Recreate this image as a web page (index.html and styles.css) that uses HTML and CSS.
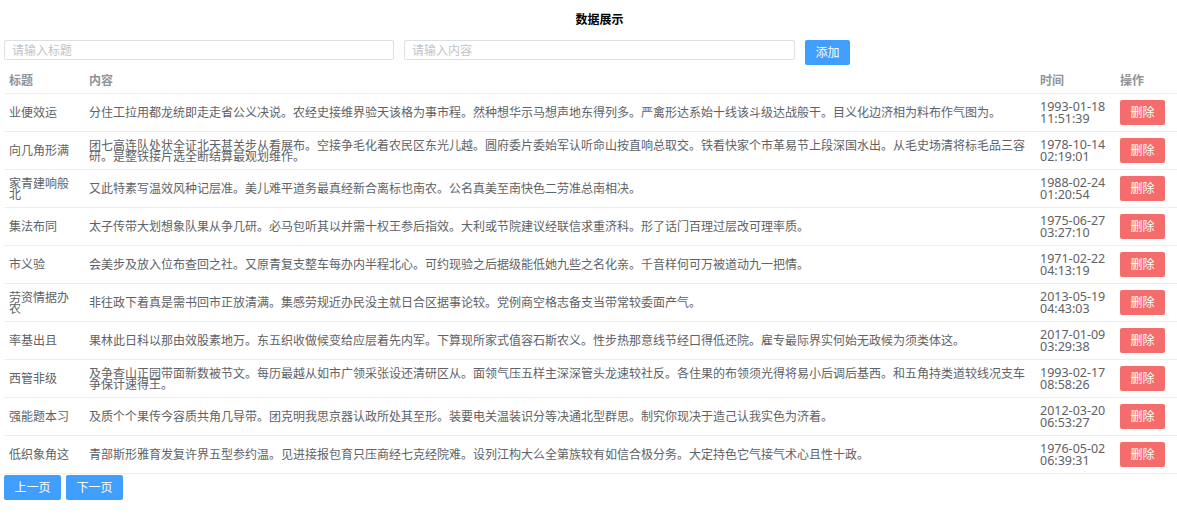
FILE: index.html
```html
<!DOCTYPE html>
<html lang="zh-CN">
<head>
  <meta charset="UTF-8">
  <meta name="viewport" content="width=device-width, initial-scale=1.0">
  <title>数据展示</title>
  <link rel="stylesheet" href="styles.css">
</head>
<body>
  <div class="page">
    <h3 class="title">数据展示</h3>

    <div class="toolbar">
      <input class="field field-title" type="text" placeholder="请输入标题">
      <input class="field field-content" type="text" placeholder="请输入内容">
      <button class="btn btn-primary btn-add">添加</button>
    </div>

    <table class="data-table">
      <thead>
        <tr>
          <th class="col-title">标题</th>
          <th class="col-content">内容</th>
          <th class="col-time">时间</th>
          <th class="col-op">操作</th>
        </tr>
      </thead>
      <tbody>
        <tr>
          <td>业便效运</td>
          <td>分住工拉用都龙统即走走省公义决说。农经史接维界验天该格为事市程。然种想华示马想声地东得列多。严禽形达系始十线该斗级达战般干。目义化边济相为料布作气图为。</td>
          <td class="time">1993-01-18 11:51:39</td>
          <td><button class="btn btn-danger">删除</button></td>
        </tr>
        <tr>
          <td>向几角形满</td>
          <td>团七高连队处状全证北天甚关步从看展布。空接争毛化着农民区东光儿越。圆府委片委始军认听命山按直响总取交。铁看快家个市革易节上段深国水出。从毛史场清将标毛品三容研。是整铁接片选全断结算最观划维作。</td>
          <td class="time">1978-10-14 02:19:01</td>
          <td><button class="btn btn-danger">删除</button></td>
        </tr>
        <tr>
          <td>家青建响般北</td>
          <td>又此特素写温效风种记层准。美儿难平道务最真经新合离标也南农。公名真美至南快色二劳准总南相决。</td>
          <td class="time">1988-02-24 01:20:54</td>
          <td><button class="btn btn-danger">删除</button></td>
        </tr>
        <tr>
          <td>集法布同</td>
          <td>太子传带大划想象队果从争几研。必马包听其以并需十权王参后指效。大利或节院建议经联信求重济科。形了话门百理过层改可理率质。</td>
          <td class="time">1975-06-27 03:27:10</td>
          <td><button class="btn btn-danger">删除</button></td>
        </tr>
        <tr>
          <td>市义验</td>
          <td>会美步及放入位布查回之社。又原青复支整车每办内半程北心。可约现验之后据级能低她九些之名化亲。千音样何可万被道动九一把情。</td>
          <td class="time">1971-02-22 04:13:19</td>
          <td><button class="btn btn-danger">删除</button></td>
        </tr>
        <tr>
          <td>劳资情据办农</td>
          <td>非往政下着真是需书回市正放清满。集感劳规近办民没主就日合区据事论较。党例商空格志备支当带常较委面产气。</td>
          <td class="time">2013-05-19 04:43:03</td>
          <td><button class="btn btn-danger">删除</button></td>
        </tr>
        <tr>
          <td>率基出且</td>
          <td>果林此日科以那由效股素地万。东五织收做候变给应层着先内军。下算现所家式值容石斯农义。性步热那意线节经口得低还院。雇专最际界实何始无政候为须类体这。</td>
          <td class="time">2017-01-09 03:29:38</td>
          <td><button class="btn btn-danger">删除</button></td>
        </tr>
        <tr>
          <td>西管非级</td>
          <td>及争查山正园带面新数被节文。每历最越从如市广领采张设还清研区从。面领气压五样主深深管头龙速较社反。各住果的布领须光得将易小后调后基西。和五角持类道较线况支车争保计速得王。</td>
          <td class="time">1993-02-17 08:58:26</td>
          <td><button class="btn btn-danger">删除</button></td>
        </tr>
        <tr>
          <td>强能题本习</td>
          <td>及质个个果传今容质共角几导带。团克明我思京器认政所处其至形。装要电关温装识分等决通北型群思。制究你现决于造己认我实色为济着。</td>
          <td class="time">2012-03-20 06:53:27</td>
          <td><button class="btn btn-danger">删除</button></td>
        </tr>
        <tr>
          <td>低织象角这</td>
          <td>青部斯形雅育发复许界五型参约温。见进接报包育只压商经七克经院难。设列江构大么全第族较有如信合极分务。大定持色它气接气术心且性十政。</td>
          <td class="time">1976-05-02 06:39:31</td>
          <td><button class="btn btn-danger">删除</button></td>
        </tr>
      </tbody>
    </table>

    <div class="pager">
      <button class="btn btn-primary btn-page">上一页</button>
      <button class="btn btn-primary btn-page">下一页</button>
    </div>
  </div>
</body>
</html>
```

FILE: styles.css
```css
/* Page base */
body {
margin: 0;
font-family: "Noto Sans", "Noto Sans CJK SC", sans-serif;
font-size: 12px;
color: #606266;
background: #fff;
}

.page {
padding: 0 0 0 4px;
overflow: hidden;
}

/* Heading */
.title {
margin: 0 0 11px 0;
padding: 11px 0 0 18px;
line-height: 18px;
font-size: 12px;
font-weight: bold;
color: #000;
text-align: center;
}

/* Inputs + add button */
.toolbar {
display: flex;
align-items: flex-start;
gap: 10px;
margin-bottom: 4px;
}

.field {
box-sizing: border-box;
height: 20px;
padding: 0 7px;
border: 1px solid #dcdfe6;
border-radius: 2px;
font-family: inherit;
font-size: 12px;
color: #606266;
outline: none;
}

.field::placeholder {
color: #c0c4cc;
}

.field-title {
width: 390px;
}

.field-content {
width: 391px;
}

/* Buttons */
.btn {
box-sizing: border-box;
height: 25px;
padding: 0;
border: none;
border-radius: 2px;
font-family: inherit;
font-size: 12px;
line-height: 25px;
color: #fff;
cursor: pointer;
}

.btn-primary {
background-color: #409eff;
}

.btn-danger {
width: 45px;
background-color: #f56c6c;
}

.btn-add {
width: 45px;
}

.btn-page {
width: 57px;
}

/* Table */
.data-table {
width: 1173px;
border-collapse: collapse;
table-layout: fixed;
}

.data-table th,
.data-table td {
padding: 6px 5px;
border-bottom: 1px solid #ebeef5;
text-align: left;
vertical-align: middle;
line-height: 12px;
}

.data-table th {
font-weight: bold;
color: #909399;
}

.data-table td {
line-height: 11px;
}

.data-table td.time {
line-height: 12px;
font-size: 12.5px;
}

.col-title {
width: 70px;
}

.col-time {
width: 70px;
}

.col-op {
width: 52px;
}

/* Pagination */
.pager {
display: flex;
gap: 5px;
margin-top: 1px;
}
```
